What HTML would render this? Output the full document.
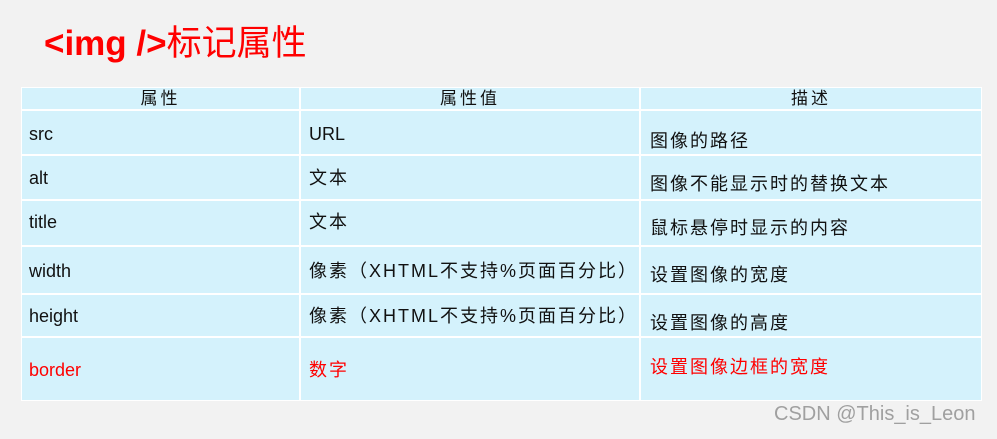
<!DOCTYPE html>
<html><head><meta charset="utf-8"><style>
body{margin:0;width:997px;height:439px;background:#f2f2f2;position:relative;overflow:hidden;font-family:"Liberation Sans","Noto Sans CJK SC",sans-serif;}
.t{position:absolute;left:44px;top:15px;font-size:35px;color:#ff0000;white-space:nowrap;}
.t b{font-weight:bold}
.c{position:absolute;background:#d4f2fc;}
.x{position:absolute;font-size:18px;color:#111;white-space:nowrap;line-height:20px;}
.k{letter-spacing:2px}
.h{position:absolute;font-size:17px;color:#111;text-align:center;line-height:20px;letter-spacing:3px}
.r{color:#ff0000}
.w{position:absolute;left:774px;top:403px;font-size:20px;color:#a0a0a0;}
</style></head><body>
<div class="t"><b>&lt;img /&gt;</b>标记属性</div>
<div style="position:absolute;left:21px;top:87px;width:961px;height:314px;background:#fff"></div>
<div class="c" style="left:22px;top:88px;width:277px;height:21px"></div>
<div class="c" style="left:301px;top:88px;width:338px;height:21px"></div>
<div class="c" style="left:641px;top:88px;width:340px;height:21px"></div>

<div class="c" style="left:22px;top:111px;width:277px;height:43px"></div>
<div class="c" style="left:301px;top:111px;width:338px;height:43px"></div>
<div class="c" style="left:641px;top:111px;width:340px;height:43px"></div>

<div class="c" style="left:22px;top:156px;width:277px;height:43px"></div>
<div class="c" style="left:301px;top:156px;width:338px;height:43px"></div>
<div class="c" style="left:641px;top:156px;width:340px;height:43px"></div>

<div class="c" style="left:22px;top:201px;width:277px;height:44px"></div>
<div class="c" style="left:301px;top:201px;width:338px;height:44px"></div>
<div class="c" style="left:641px;top:201px;width:340px;height:44px"></div>

<div class="c" style="left:22px;top:247px;width:277px;height:46px"></div>
<div class="c" style="left:301px;top:247px;width:338px;height:46px"></div>
<div class="c" style="left:641px;top:247px;width:340px;height:46px"></div>

<div class="c" style="left:22px;top:295px;width:277px;height:41px"></div>
<div class="c" style="left:301px;top:295px;width:338px;height:41px"></div>
<div class="c" style="left:641px;top:295px;width:340px;height:41px"></div>

<div class="c" style="left:22px;top:338px;width:277px;height:62px"></div>
<div class="c" style="left:301px;top:338px;width:338px;height:62px"></div>
<div class="c" style="left:641px;top:338px;width:340px;height:62px"></div>

<div class="h" style="left:22px;top:89px;width:277px">属性</div>
<div class="h" style="left:301px;top:89px;width:338px">属性值</div>
<div class="h" style="left:641px;top:89px;width:340px">描述</div>

<div class="x" style="left:29px;top:124px">src</div>
<div class="x" style="left:309px;top:124px">URL</div>
<div class="x k" style="left:650px;top:131px">图像的路径</div>

<div class="x" style="left:29px;top:168px">alt</div>
<div class="x k" style="left:309px;top:168px">文本</div>
<div class="x k" style="left:650px;top:174px">图像不能显示时的替换文本</div>

<div class="x" style="left:29px;top:212px">title</div>
<div class="x k" style="left:309px;top:212px">文本</div>
<div class="x k" style="left:650px;top:218px">鼠标悬停时显示的内容</div>

<div class="x" style="left:29px;top:261px">width</div>
<div class="x k" style="left:309px;top:261px">像素（XHTML不支持%页面百分比）</div>
<div class="x k" style="left:650px;top:265px">设置图像的宽度</div>

<div class="x" style="left:29px;top:306px">height</div>
<div class="x k" style="left:309px;top:306px">像素（XHTML不支持%页面百分比）</div>
<div class="x k" style="left:650px;top:313px">设置图像的高度</div>

<div class="x r" style="left:29px;top:360px">border</div>
<div class="x r k" style="left:309px;top:360px">数字</div>
<div class="x r k" style="left:650px;top:357px">设置图像边框的宽度</div>

<div class="w">CSDN @This_is_Leon</div>
</body></html>
